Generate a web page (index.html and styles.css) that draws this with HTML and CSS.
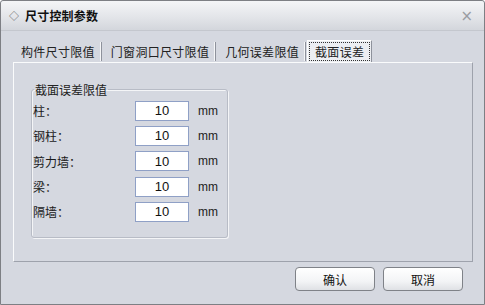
FILE: index.html
```html
<!DOCTYPE HTML>
<html>
<head>
  <meta http-equiv="content-type" content="text/html; charset=utf-8">
  <title>尺寸控制参数</title>
  <link rel="stylesheet" href="styles.css">
</head>
<body>
  <div class="dialog">
    <div class="titlebar">
      <span class="title-icon">&#9671;</span>
      <span class="title">尺寸控制参数</span>
      <span class="close">&#215;</span>
    </div>
    <div class="content">
      <div class="tabs">
        <span class="tab">构件尺寸限值</span>
        <span class="tab">门窗洞口尺寸限值</span>
        <span class="tab">几何误差限值</span>
        <span class="tab active"><span class="focus">截面误差</span></span>
      </div>
      <div class="panel">
        <fieldset class="group">
          <legend>截面误差限值</legend>
          <div class="row"><label>柱：</label><input type="text" value="10"><span class="unit">mm</span></div>
          <div class="row"><label>钢柱：</label><input type="text" value="10"><span class="unit">mm</span></div>
          <div class="row"><label>剪力墙：</label><input type="text" value="10"><span class="unit">mm</span></div>
          <div class="row"><label>梁：</label><input type="text" value="10"><span class="unit">mm</span></div>
          <div class="row"><label>隔墙：</label><input type="text" value="10"><span class="unit">mm</span></div>
        </fieldset>
      </div>
      <div class="buttons">
        <button>确认</button>
        <button>取消</button>
      </div>
    </div>
  </div>
</body>
</html>
```

FILE: styles.css
```css
html, body {
  margin: 0;
  padding: 0;
  background-color: #fff;
  font-family: "Noto Sans CJK SC", sans-serif;
  font-size: 12px;
  color: #1a1a1a;
}
.dialog {
  width: 483px;
  height: 303px;
  border: 1px solid #7d7f84;
  border-radius: 3px 3px 0 0;
  background-color: #d5d8e0;
  display: flex;
  flex-direction: column;
}
.titlebar {
  height: 29px;
  display: flex;
  align-items: center;
  padding: 0 10px 0 8px;
  background: linear-gradient(#f4f5f7, #e3e5e9 55%, #d3d6dc);
  border-bottom: 1px solid #c4c7ce;
  border-radius: 3px 3px 0 0;
}
.title-icon {
  font-size: 10px;
  color: #555;
  width: 14px;
}
.title {
  font-weight: bold;
  font-size: 12px;
  letter-spacing: 0.2px;
  color: #111;
  flex: 1;
  margin-left: 2px;
}
.close {
  font-family: "DejaVu Sans", sans-serif;
  font-size: 15px;
  color: #9a9ca2;
  margin-right: 1px;
}
.content {
  flex: 1;
  padding: 9px 12px 0 12px;
  display: flex;
  flex-direction: column;
}
.tabs {
  display: flex;
  height: 22px;
  align-items: center;
  padding-left: 7px;
  font-size: 12px;
  letter-spacing: 0.3px;
}
.tab {
  padding: 0 5px 0 9px;
  border-right: 1px solid #f5f6f8;
  box-shadow: 1px 0 0 #8e929c;
  margin-right: 1px;
  line-height: 19px;
  color: #222;
}
.tab:first-child {
  padding-left: 1px;
}
.tab.active {
  border: none;
  box-shadow: none;
  padding: 1px 1px;
  margin-left: 1px;
  background-color: #eceef2;
  border-top: 1px solid #fff;
  border-left: 1px solid #fff;
  border-right: 1px solid #8e929c;
}
.focus {
  display: block;
  border: 1px dotted #333;
  padding: 0 5px 0 5px;
  line-height: 17px;
}
.panel {
  height: 200px;
  border-top: 1px solid #fafbfc;
  border-left: 1px solid #fafbfc;
  border-right: 1px solid #9ea2ac;
  border-bottom: 1px solid #9ea2ac;
  padding: 18px 0 0 17px;
  box-sizing: border-box;
  width: 460px;
}
.group {
  width: 197px;
  height: 157px;
  box-sizing: border-box;
  margin: 0;
  padding: 0;
  border: 1px solid #b8bcc6;
  border-radius: 3px;
  box-shadow: inset 1px 1px 0 #f4f5f7, 1px 1px 0 #f4f5f7;
}
.group legend {
  padding: 0 1px;
  margin-left: 2px;
  font-size: 12px;
  color: #222;
}
.row {
  display: flex;
  align-items: center;
  height: 25.3px;
}
.row label {
  width: 102px;
  padding-left: 1px;
  font-size: 12px;
}
.row input {
  width: 52px;
  height: 18px;
  box-sizing: content-box;
  padding: 0;
  border: 1px solid #8fa0c6;
  background: #fff;
  font-family: "Liberation Sans", sans-serif;
  font-size: 13px;
  text-align: center;
  color: #111;
  outline: none;
}
.unit {
  margin-left: 9px;
  font-family: "Liberation Sans", sans-serif;
  font-size: 12px;
  color: #222;
}
.buttons {
  display: flex;
  justify-content: flex-end;
  gap: 8px;
  padding: 5px 9px 0 0;
}
.buttons button {
  width: 80px;
  height: 24px;
  border: 1px solid #7f8288;
  border-radius: 4px;
  background: linear-gradient(#ffffff, #f3f4f6 60%, #dfe1e5);
  font-family: "Noto Sans CJK SC", sans-serif;
  font-size: 12px;
  color: #111;
  padding: 0;
}
```
